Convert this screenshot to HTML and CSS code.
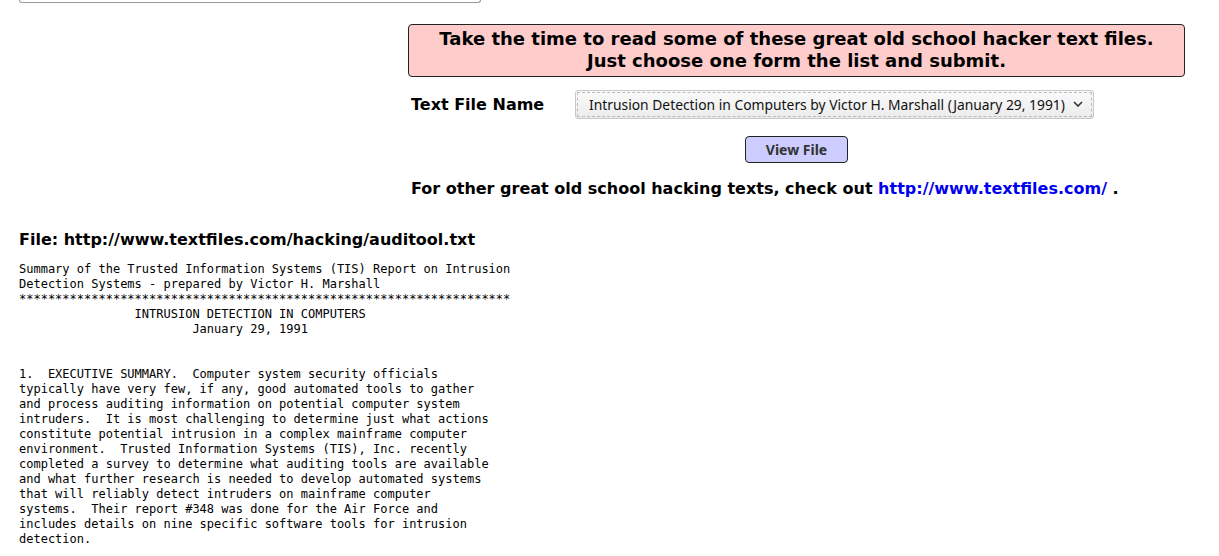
FILE: index.html
```html
<!DOCTYPE html>
<html>
<head>
<meta charset="utf-8">
<link rel="stylesheet" href="styles.css">
</head>
<body>
<div class="stub"></div>
<div class="panel">
  <div class="notice">Take the time to read some of these great old school hacker text files.<br>Just choose one form the list and submit.</div>
  <div class="form-row">
    <span class="label">Text File Name</span>
    <div class="select"><span class="opt">Intrusion Detection in Computers by Victor H. Marshall (January 29, 1991)</span>
      <svg class="chev" width="10" height="6" viewBox="0 0 10 6"><path d="M1 1 L5 5 L9 1" fill="none" stroke="#333" stroke-width="1.6"/></svg>
    </div>
  </div>
  <div class="btn-row"><button class="btn">View File</button></div>
  <p class="other">For other great old school hacking texts, check out <a href="#">http://www.textfiles.com/</a> .</p>
</div>
<h3 class="file">File: http://www.textfiles.com/hacking/auditool.txt</h3>
<pre class="text">Summary of the Trusted Information Systems (TIS) Report on Intrusion
Detection Systems - prepared by Victor H. Marshall
********************************************************************
                INTRUSION DETECTION IN COMPUTERS
                        January 29, 1991


1.  EXECUTIVE SUMMARY.  Computer system security officials
typically have very few, if any, good automated tools to gather
and process auditing information on potential computer system
intruders.  It is most challenging to determine just what actions
constitute potential intrusion in a complex mainframe computer
environment.  Trusted Information Systems (TIS), Inc. recently
completed a survey to determine what auditing tools are available
and what further research is needed to develop automated systems
that will reliably detect intruders on mainframe computer
systems.  Their report #348 was done for the Air Force and
includes details on nine specific software tools for intrusion
detection.
</pre>
</body>
</html>
```
FILE: styles.css
```css
html, body { margin: 0; padding: 0; background: #fff; }
body { font-family: "DejaVu Sans", sans-serif; color: #000; overflow: hidden; }
.stub {
  margin-left: 19px;
  width: 460px;
  height: 2px;
  border: 1px solid #999;
  border-top: none;
  border-radius: 0 0 6px 6px;
}
.panel { margin-left: 408px; width: 777px; padding-top: 21px; }
.notice {
  background: #ffcccc;
  border: 1px solid #222;
  border-radius: 4px;
  text-align: center;
  font-weight: bold;
  font-size: 18px;
  line-height: 22px;
  padding: 3px 0 4px;
}
.form-row { display: flex; align-items: center; margin-top: 12px; height: 30px; }
.label { font-weight: bold; font-size: 16px; width: 164px; padding-left: 3px; }
.select {
  width: 519px; height: 29px;
  box-sizing: border-box;
  border: 1px solid #c8c8c8;
  border-radius: 3px;
  background: linear-gradient(#fafafa, #ececec);
  outline: 1px dashed #bbb;
  outline-offset: -3px;
  display: flex; align-items: center;
  padding: 0 0 0 13px;
  font-family: "Noto Sans", "Open Sans", sans-serif;
  font-size: 13.85px; color: #111;
  white-space: nowrap;
}
.opt { flex: 0 0 auto; }
.chev { margin-left: 8px; flex: 0 0 auto; }
.btn-row { display: flex; margin-top: 17px; padding-left: 337px; }
.btn {
  width: 103px; height: 27px;
  background: #ccccff;
  border: 1px solid #222;
  border-radius: 4px;
  font-family: "Noto Sans", "Open Sans", sans-serif;
  font-weight: bold; font-size: 14px; color: #333;
  padding: 0;
}
.other { font-weight: bold; font-size: 16px; margin: 16px 0 0 3px; line-height: 20px; }
.other a { color: #0000ee; text-decoration: none; }
.file { font-size: 16px; margin: 31px 0 0 19px; line-height: 20px; }
.text {
  font-family: "DejaVu Sans Mono", monospace;
  font-size: 12px; line-height: 15px;
  margin: 12px 0 0 19px;
}
```
